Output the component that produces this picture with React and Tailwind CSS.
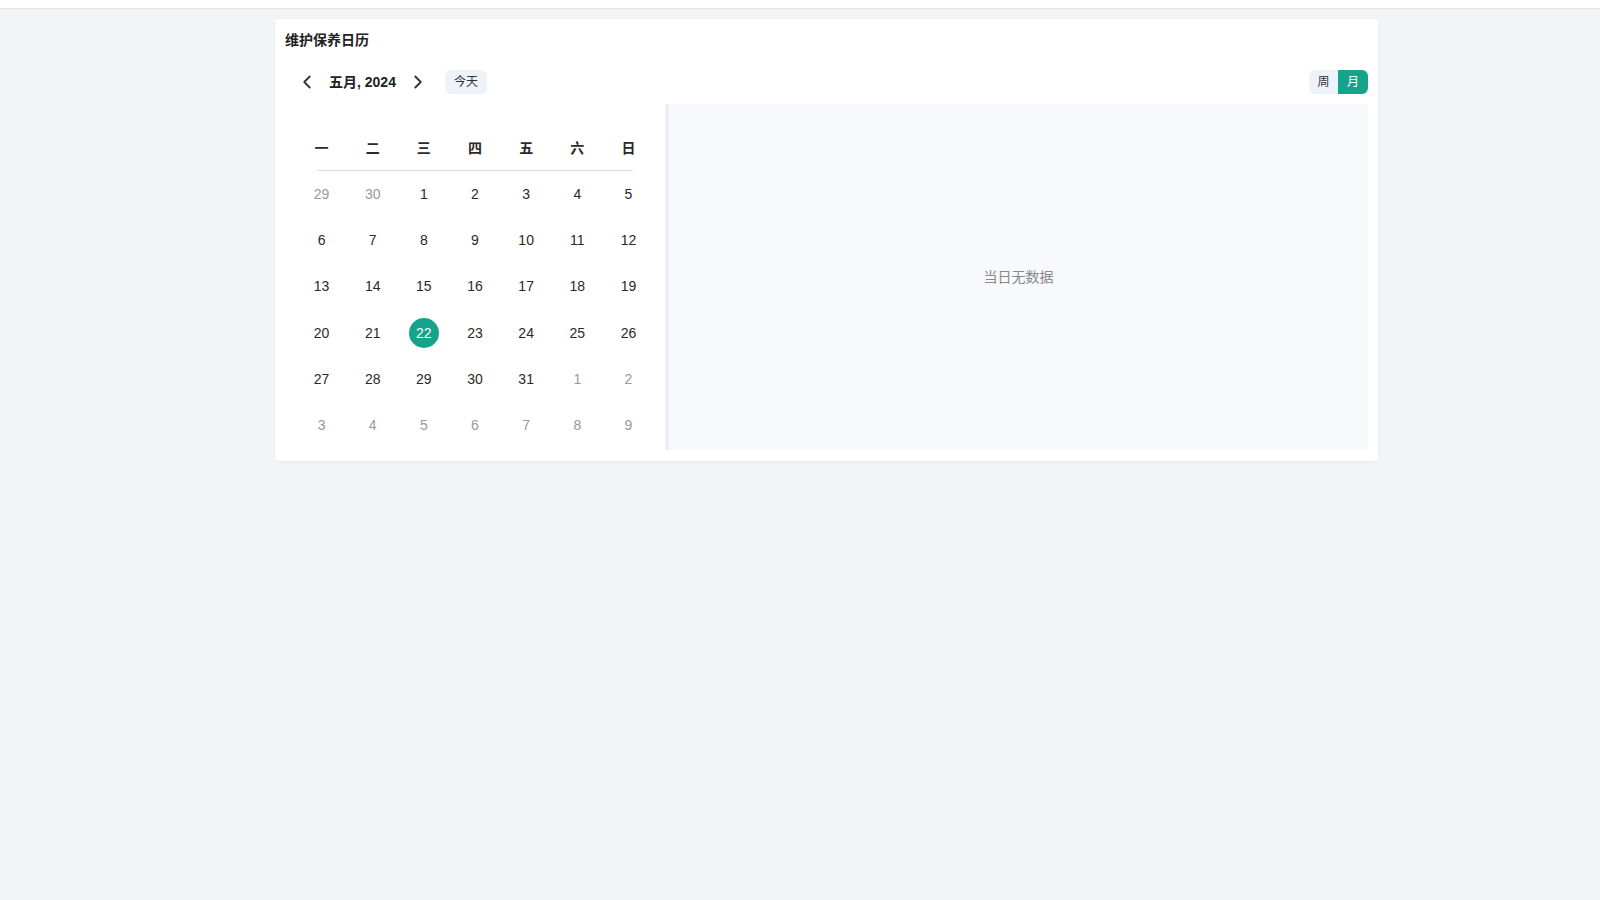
import React, { useState } from 'react';
import { ChevronLeft, ChevronRight } from 'lucide-react';

const weekdays = ['一', '二', '三', '四', '五', '六', '日'];

// May 2024 grid, Monday first
const buildDays = () => {
  const days = [];
  days.push({ d: 29, out: true }, { d: 30, out: true });
  for (let i = 1; i <= 31; i++) days.push({ d: i, out: false });
  let n = 1;
  while (days.length < 42) days.push({ d: n++, out: true });
  return days;
};

const App = () => {
  const [view, setView] = useState('month');
  const [selected, setSelected] = useState(22);
  const days = buildDays();

  return (
    <div
      className="min-h-screen bg-[#f3f4f6] text-[#333]"
      style={{ fontFamily: '"Liberation Sans", "Noto Sans CJK SC", sans-serif' }}
    >
      <div className="h-[9px] bg-white border-b border-[#e4e6ea]" />

      <div className="ml-[275px] mt-[10px] w-[1103px] bg-white rounded-sm shadow-[0_1px_3px_rgba(0,0,0,0.06)] px-[10px] pt-[11px] pb-[11px]">
        <div className="h-[20px] leading-[20px] text-[14px] font-bold text-[#222]">维护保养日历</div>

        <div className="mt-[20px] h-[24px] flex items-center justify-between">
          <div className="flex items-center pl-[10px]">
            <button className="w-[24px] h-[24px] flex items-center justify-center text-[#333]">
              <ChevronLeft size={22} strokeWidth={2} />
            </button>
            <span className="ml-[10px] text-[14px] font-bold text-[#222]">五月, 2024</span>
            <button className="ml-[10px] w-[24px] h-[24px] flex items-center justify-center text-[#333]">
              <ChevronRight size={22} strokeWidth={2} />
            </button>
            <button className="ml-[15px] w-[42px] h-[24px] rounded-md bg-[#eef2fa] text-[12px] text-[#333]">
              今天
            </button>
          </div>

          <div className="flex h-[24px] rounded-md overflow-hidden text-[12px]">
            <button
              onClick={() => setView('week')}
              className={view === 'week' ? 'w-[29px] bg-[#15a38c] text-white' : 'w-[29px] bg-[#eef2fa] text-[#333]'}
            >
              周
            </button>
            <button
              onClick={() => setView('month')}
              className={view === 'month' ? 'w-[30px] bg-[#15a38c] text-white' : 'w-[30px] bg-[#eef2fa] text-[#333]'}
            >
              月
            </button>
          </div>
        </div>

        <div className="mt-[10px] flex">
          <div className="w-[380px] px-[11px] pt-[22px]">
            <div className="grid grid-cols-7 h-[44px] items-center">
              {weekdays.map((w) => (
                <div key={w} className="text-center text-[14px] font-bold text-[#2a2a2a]">{w}</div>
              ))}
            </div>
            <div className="mx-[21px] border-b border-[#d9dbe0]" />
            <div className="grid grid-cols-7">
              {days.map((day, i) => (
                <div key={i} className="h-[46.3px] flex items-center justify-center">
                  {!day.out && day.d === selected ? (
                    <span className="w-[30px] h-[30px] rounded-full bg-[#15a38c] text-white text-[14px] flex items-center justify-center">
                      {day.d}
                    </span>
                  ) : (
                    <span
                      onClick={() => !day.out && setSelected(day.d)}
                      className={day.out ? 'text-[14px] text-[#999]' : 'text-[14px] text-[#2a2a2a] cursor-pointer'}
                    >
                      {day.d}
                    </span>
                  )}
                </div>
              ))}
            </div>
          </div>

          <div className="flex-1 h-[346px] border-l-4 border-[#e9eef8] bg-[#f7f9fc] flex items-center justify-center">
            <span className="text-[14px] text-[#888]">当日无数据</span>
          </div>
        </div>
      </div>
    </div>
  );
};

export default App;
